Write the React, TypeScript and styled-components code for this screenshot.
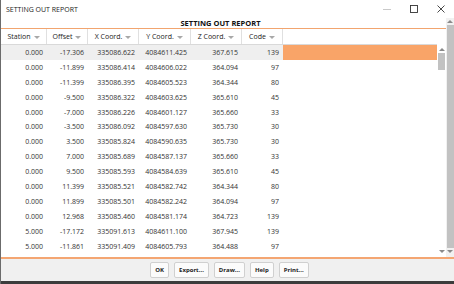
import styled, { createGlobalStyle } from "styled-components";

const GlobalStyle = createGlobalStyle`
  html, body {
    margin: 0;
    padding: 0;
    background: #ffffff;
  }
  body {
    font-family: "Open Sans", "Noto Sans", sans-serif;
  }
`;

const Window = styled.div`
  width: 454px;
  height: 284px;
  display: flex;
  flex-direction: column;
  background: #ffffff;
  border-left: 1px solid #6b6b6b;
  box-sizing: border-box;
  overflow: hidden;
`;

const TitleBar = styled.div`
  height: 18px;
  flex: none;
  display: flex;
  align-items: center;
  padding-left: 5px;
  font-size: 7px;
  color: #1a1a1a;
`;

const TitleText = styled.div`
  flex: 1;
`;

const WinButton = styled.div`
  width: 27px;
  height: 18px;
  display: flex;
  align-items: center;
  justify-content: center;
  color: #333;
`;

const Body = styled.div`
  flex: 1;
  display: flex;
  min-height: 0;
`;

const Main = styled.div`
  flex: 1;
  display: flex;
  flex-direction: column;
  min-width: 0;
`;

const Heading = styled.div`
  height: 10px;
  flex: none;
  text-align: center;
  font-size: 7.5px;
  font-weight: 700;
  line-height: 10px;
  color: #111;
  border-bottom: 1px solid #f2a56f;
  padding-right: 6px;
`;

const GridArea = styled.div`
  flex: 1;
  display: flex;
  min-height: 0;
`;

const Table = styled.div`
  flex: 1;
  display: flex;
  flex-direction: column;
`;

const HeaderRow = styled.div`
  height: 15px;
  flex: none;
  display: flex;
  border-bottom: 1px solid #d9d9d9;
`;

const HeaderCell = styled.div<{ w: number }>`
  width: ${p => p.w}px;
  flex: none;
  display: flex;
  align-items: center;
  justify-content: center;
  gap: 3px;
  font-size: 7px;
  color: #1a1a1a;
  border-right: 1px solid #e0e0e0;
  box-sizing: border-box;
`;

const SortArrow = styled.span`
  width: 0;
  height: 0;
  border-left: 3px solid transparent;
  border-right: 3px solid transparent;
  border-top: 3px solid #a8a8a8;
  margin-top: 1px;
`;

const Row = styled.div`
  height: 14.9px;
  flex: none;
  display: flex;
  align-items: center;
`;

const Cell = styled.div<{ w: number; selected?: boolean }>`
  width: ${p => p.w}px;
  height: 100%;
  flex: none;
  display: flex;
  align-items: center;
  justify-content: flex-end;
  padding-right: 4px;
  box-sizing: border-box;
  font-size: 7px;
  color: #333;
  background: ${p => (p.selected ? "#efefef" : "transparent")};
`;

const Filler = styled.div<{ selected?: boolean }>`
  flex: 1;
  height: 100%;
  background: ${p => (p.selected ? "#f9a468" : "transparent")};
`;

const InnerScroll = styled.div`
  width: 9px;
  flex: none;
  display: flex;
  flex-direction: column;
  align-items: center;
  padding-top: 17px;
  padding-bottom: 2px;
  box-sizing: border-box;
`;

const OuterScroll = styled.div`
  width: 8px;
  flex: none;
  display: flex;
  flex-direction: column;
  align-items: center;
  background: #f1f1f1;
  padding-bottom: 2px;
  box-sizing: border-box;
`;

const ScrollArrow = styled.div<{ down?: boolean }>`
  width: 0;
  height: 0;
  flex: none;
  margin: 2px 0;
  border-left: 3px solid transparent;
  border-right: 3px solid transparent;
  ${p =>
    p.down
      ? "border-top: 3px solid #8a8a8a;"
      : "border-bottom: 3px solid #8a8a8a;"}
`;

const Track = styled.div`
  flex: 1;
  width: 100%;
  display: flex;
  justify-content: center;
`;

const Thumb = styled.div<{ h?: string }>`
  width: 7px;
  height: ${p => p.h || "100%"};
  background: #c2c2c2;
`;

const Footer = styled.div`
  height: 22px;
  flex: none;
  display: flex;
  align-items: center;
  justify-content: center;
  gap: 5px;
  background: #f0f0f0;
  border-top: 2px solid #f4a672;
  padding-left: 4px;
`;

const Button = styled.div`
  height: 14px;
  padding: 0 4px;
  display: flex;
  align-items: center;
  background: #fbfbfb;
  border: 1px solid #d0d0d0;
  border-radius: 2px;
  font-size: 6px;
  font-weight: 700;
  color: #222;
`;

const BottomEdge = styled.div`
  height: 3px;
  flex: none;
  background: #3c3c3c;
`;

const columns = [
  { name: "Station", w: 46 },
  { name: "Offset", w: 41 },
  { name: "X Coord.", w: 51 },
  { name: "Y Coord.", w: 52 },
  { name: "Z Coord.", w: 51 },
  { name: "Code", w: 41 },
];

const rows = [
  ["0.000", "-17.306", "335086.622", "4084611.425", "367.615", "139"],
  ["0.000", "-11.899", "335086.414", "4084606.022", "364.094", "97"],
  ["0.000", "-11.399", "335086.395", "4084605.523", "364.344", "80"],
  ["0.000", "-9.500", "335086.322", "4084603.625", "365.610", "45"],
  ["0.000", "-7.000", "335086.226", "4084601.127", "365.660", "33"],
  ["0.000", "-3.500", "335086.092", "4084597.630", "365.730", "30"],
  ["0.000", "3.500", "335085.824", "4084590.635", "365.730", "30"],
  ["0.000", "7.000", "335085.689", "4084587.137", "365.660", "33"],
  ["0.000", "9.500", "335085.593", "4084584.639", "365.610", "45"],
  ["0.000", "11.399", "335085.521", "4084582.742", "364.344", "80"],
  ["0.000", "11.899", "335085.501", "4084582.242", "364.094", "97"],
  ["0.000", "12.968", "335085.460", "4084581.174", "364.723", "139"],
  ["5.000", "-17.172", "335091.613", "4084611.100", "367.945", "139"],
  ["5.000", "-11.861", "335091.409", "4084605.793", "364.488", "97"],
];

const buttons = ["OK", "Export...", "Draw...", "Help", "Print..."];

export default function App() {
  return (
    <>
      <GlobalStyle />
      <Window>
        <TitleBar>
          <TitleText>SETTING OUT REPORT</TitleText>
          <WinButton>
            <svg width="8" height="8" viewBox="0 0 8 8">
              <line x1="0" y1="4.5" x2="8" y2="4.5" stroke="#bbb" strokeWidth="0.8" />
            </svg>
          </WinButton>
          <WinButton>
            <svg width="8" height="8" viewBox="0 0 8 8">
              <rect x="0.5" y="0.5" width="7" height="7" fill="none" stroke="#333" strokeWidth="0.9" />
            </svg>
          </WinButton>
          <WinButton>
            <svg width="8" height="8" viewBox="0 0 8 8">
              <path d="M0.5 0.5 L7.5 7.5 M7.5 0.5 L0.5 7.5" stroke="#333" strokeWidth="0.9" />
            </svg>
          </WinButton>
        </TitleBar>
        <Body>
          <Main>
            <Heading>SETTING OUT REPORT</Heading>
            <GridArea>
              <Table>
                <HeaderRow>
                  {columns.map(c => (
                    <HeaderCell key={c.name} w={c.w}>
                      {c.name}
                      <SortArrow />
                    </HeaderCell>
                  ))}
                </HeaderRow>
                {rows.map((r, i) => (
                  <Row key={i}>
                    {r.map((v, j) => (
                      <Cell key={j} w={columns[j].w} selected={i === 0}>
                        {v}
                      </Cell>
                    ))}
                    <Filler selected={i === 0} />
                  </Row>
                ))}
              </Table>
              <InnerScroll>
                <ScrollArrow />
                <Track>
                  <Thumb h="17px" />
                </Track>
                <ScrollArrow down />
              </InnerScroll>
            </GridArea>
          </Main>
          <OuterScroll>
            <ScrollArrow />
            <Track>
              <Thumb />
            </Track>
            <ScrollArrow down />
          </OuterScroll>
        </Body>
        <Footer>
          {buttons.map(b => (
            <Button key={b}>{b}</Button>
          ))}
        </Footer>
        <BottomEdge />
      </Window>
    </>
  );
}
